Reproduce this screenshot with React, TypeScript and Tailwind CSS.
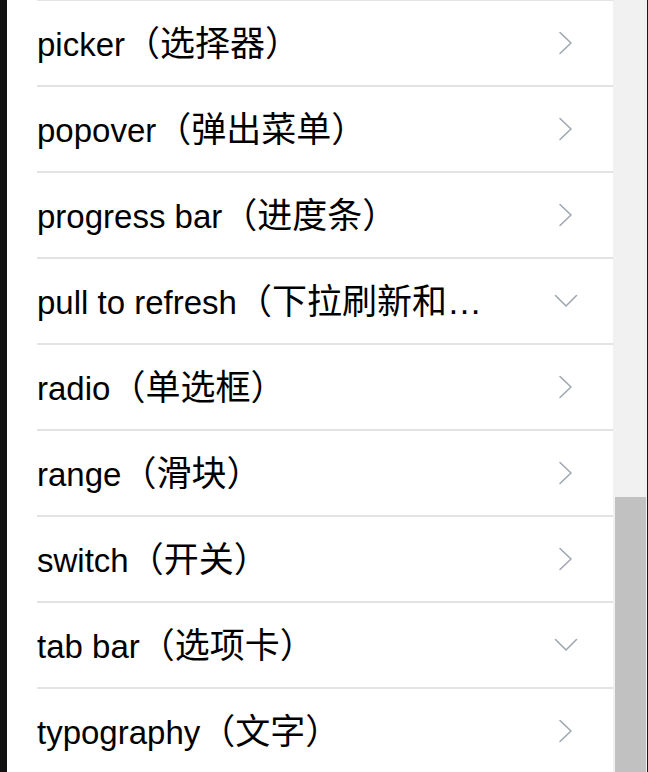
const items: { name: string; zh: string; open?: boolean }[] = [
  { name: "picker", zh: "（选择器）" },
  { name: "popover", zh: "（弹出菜单）" },
  { name: "progress bar", zh: "（进度条）" },
  { name: "pull to refresh", zh: "（下拉刷新和加载更多）", open: true },
  { name: "radio", zh: "（单选框）" },
  { name: "range", zh: "（滑块）" },
  { name: "switch", zh: "（开关）" },
  { name: "tab bar", zh: "（选项卡）", open: true },
  { name: "typography", zh: "（文字）" },
];

function Chevron({ open }: { open?: boolean }) {
  return (
    <svg width="24" height="24" viewBox="0 0 24 24" fill="none" stroke="#9fa7b1" strokeWidth="1.6" strokeLinecap="round" strokeLinejoin="round">
      {open ? <polyline points="1.5,6.5 12,17 22.5,6.5" /> : <polyline points="6,1.5 17,12 6,22.5" />}
    </svg>
  );
}

export default function App() {
  return (
    <div className="flex h-[772px] w-[648px] overflow-hidden bg-white font-['Liberation_Sans','Noto_Sans_CJK_SC',sans-serif]">
      {/* left dark edge */}
      <div className="w-[7px] shrink-0 bg-[#111111]" />

      {/* list */}
      <div className="flex-1 min-w-0">
        <div className="ml-[30px] h-[1px] bg-[#e3e3e3]" />
        {items.map((item) => (
          <div key={item.name} className="ml-[30px] flex h-[86px] items-center border-b-2 border-[#e3e3e3]">
            <div className="min-w-0 w-[460px] truncate pt-[2px] text-[35px] leading-[36px] text-black">
              <span className="text-[33px]">{item.name}</span>
              <span>{item.zh}</span>
            </div>
            <div className="ml-auto mr-[35px] flex w-[24px] items-center justify-center">
              <Chevron open={item.open} />
            </div>
          </div>
        ))}
      </div>

      {/* scrollbar */}
      <div className="flex w-[35px] shrink-0 flex-col border-r border-[#1a1a1a] bg-[#f1f1f1] pl-[2px] pr-[1px]">
        <div className="h-[497px] shrink-0" />
        <div className="flex-1 bg-[#c1c1c1]" />
      </div>
    </div>
  );
}
